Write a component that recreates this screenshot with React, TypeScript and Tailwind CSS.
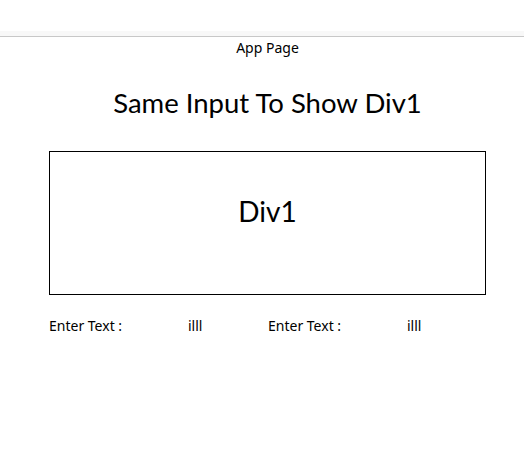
export default function App() {
  return (
    <div className="w-[524px] h-[458px] bg-white text-black overflow-hidden" style={{ fontFamily: '"Noto Sans", sans-serif' }}>
      <div className="h-[31px] bg-white" />
      <div className="h-[6px] bg-[#f8f8f8] border-b border-[#c8c8c8]" />
      <div className="pl-[11px]">
        <div className="text-center text-[14px] leading-[20px] mt-[1px]">App Page</div>
        <div className="text-center text-[27.5px] leading-[36px] mt-[27px]" style={{ fontFamily: 'Lato, sans-serif' }}>
          Same Input To Show Div1
        </div>
        <div
          className="ml-[38px] mt-[30px] w-[437px] h-[144px] border border-black flex items-center justify-center text-[28px] pb-[24px]"
          style={{ fontFamily: 'Lato, sans-serif' }}
        >
          Div1
        </div>
        <div className="ml-[38px] mt-[21px] flex text-[14px] leading-[20px]">
          <div className="flex w-[219px]">
            <span className="w-[139px]">Enter Text :</span>
            <span>illl</span>
          </div>
          <div className="flex w-[219px]">
            <span className="w-[139px]">Enter Text :</span>
            <span>illl</span>
          </div>
        </div>
      </div>
    </div>
  );
}
